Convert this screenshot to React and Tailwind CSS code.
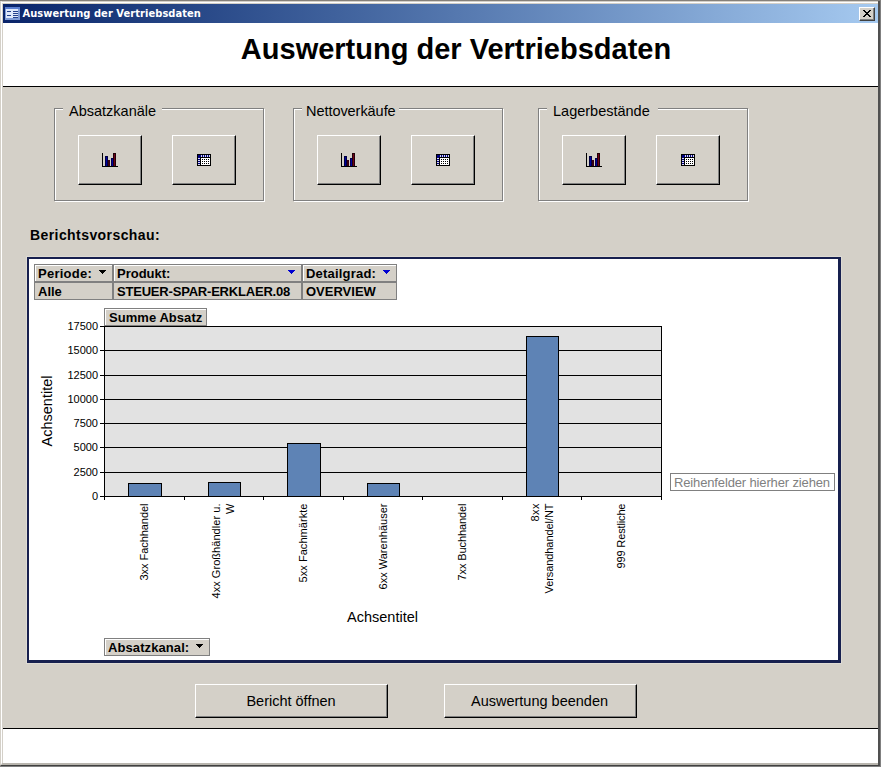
import React from "react";

const SANS = "font-['Liberation_Sans',Arial,sans-serif]";

function ChartIcon() {
  return (
    <svg width="16" height="14" viewBox="0 0 16 14" shapeRendering="crispEdges" className="block">
      <path d="M0 0h1v14h-1zM0 13h16v1H0z" fill="#000" />
      <path d="M3 3h3v10H3z" fill="#000040" />
      <path d="M4 4h1v9H4z" fill="#0000a0" />
      <path d="M6 7h2v6H6z" fill="#3a0010" />
      <path d="M9 5h3v8H9z" fill="#000050" />
      <path d="M10 6h1v7h-1z" fill="#0000a0" />
      <path d="M11 0h3v13h-3z" fill="#200008" />
      <path d="M12 1h1v12h-1z" fill="#700018" />
    </svg>
  );
}

function GridIcon() {
  const cols = [5, 7, 9, 11];
  const rows = [5, 7, 9];
  return (
    <svg width="14" height="12" viewBox="0 0 14 12" shapeRendering="crispEdges" className="block">
      <path d="M0 0h14v12H0z" fill="#000" />
      <path d="M1 1h12v2H1zM1 3h2v8H1z" fill="#000080" />
      <path d="M4 1h1v2H4zM6 1h1v2H6zM8 1h1v2H8zM10 1h1v2h-1zM12 1h1v2h-1z" fill="#d8d8f0" />
      <path d="M1 4h2v1H1zM1 6h2v1H1zM1 8h2v1H1zM1 10h2v1H1z" fill="#d8d8f0" />
      <path d="M4 4h9v7H4z" fill="#fff" />
      {rows.map((y) => cols.map((x) => <rect key={x + "-" + y} x={x} y={y} width="1" height="1" fill="#000" />))}
    </svg>
  );
}

function PushButton({ className, innerClass = "pt-px pl-px", children }) {
  return (
    <button className={"block border border-t-white border-l-white border-r-black border-b-black bg-[#d4d0c8] " + className}>
      <span className={"flex h-full w-full items-center justify-center border-r border-b border-[#808080] " + innerClass}>{children}</span>
    </button>
  );
}

function Group({ label, className, labelClass }) {
  return (
    <fieldset className={"h-[93px] w-[210px] border border-[#808080] shadow-[inset_1px_1px_0_#fff,1px_1px_0_#fff] " + className}>
      <div className={"-mt-[6px] ml-2 flex h-4 items-center bg-[#d4d0c8] text-[14.5px] leading-4 " + labelClass}>{label}</div>
      <div className="mt-4 ml-[23px] flex gap-[30px]">
        <PushButton className="h-[50px] w-16"><ChartIcon /></PushButton>
        <PushButton className="h-[50px] w-16"><GridIcon /></PushButton>
      </div>
    </fieldset>
  );
}

function Arrow({ color = "#000" }) {
  return (
    <svg width="7" height="4" viewBox="0 0 7 4" shapeRendering="crispEdges" className="block">
      <path d="M0 0h7v1H0zM1 1h5v1H1zM2 2h3v1H2zM3 3h1v1H3z" fill={color} />
    </svg>
  );
}

function Field({ title, value, color, className, titleClass = "", valueClass = "" }) {
  return (
    <div className={"border-r border-[#808080] " + className}>
      <div className="flex h-[18px] justify-between border-t border-b border-l border-[#808080] pr-[6px] pl-[3px] shadow-[inset_1px_1px_0_#fff]">
        <span className={"leading-[17px] " + titleClass}>{title}</span>
        <span className="mt-[5px]"><Arrow color={color} /></span>
      </div>
      <div className={"h-[18px] border-t border-b border-l border-[#808080] pl-[3px] leading-[17px] " + valueClass}>{value}</div>
    </div>
  );
}

const Y_TICKS = [
  [17500, 326], [15000, 350], [12500, 375], [10000, 399],
  [7500, 423], [5000, 447], [2500, 472], [0, 496],
];
const X_TICKS = [104, 184, 263, 343, 422, 502, 581, 661];
const BARS = [[128, 34, 483], [208, 33, 482], [287, 34, 443], [367, 33, 483], [526, 33, 336]];
const X_LABELS = [
  [148, "3xx Fachhandel", 77], [220, "4xx Großhändler u.", 95], [234, "W", 11],
  [307, "5xx Fachmärkte", 79], [387, "6xx Warenhäuser", 86], [466, "7xx Buchhandel", 77],
  [539, "8xx", 18], [553, "Versandhandel/NT", 90], [625, "999 Restliche", 65],
];

function SalesChart() {
  return (
    <svg width="637" height="312" viewBox="29 326 637 312" className={"block shrink-0 overflow-visible " + SANS}>
      <g shapeRendering="crispEdges">
        <rect x="104" y="326" width="558" height="171" fill="#e2e2e2" />
        {Y_TICKS.map(([v, y]) => <rect key={v} x="100" y={y} width="562" height="1" />)}
        {X_TICKS.map((x) => <rect key={x} x={x} y="496" width="1" height="4" />)}
        <rect x="104" y="326" width="1" height="171" />
        <rect x="661" y="326" width="1" height="171" />
        {BARS.map(([x, w, y]) => (
          <g key={x}>
            <rect x={x} y={y} width={w} height={497 - y} />
            <rect x={x + 1} y={y + 1} width={w - 2} height={495 - y} fill="#5e83b5" />
          </g>
        ))}
      </g>
      <g fontSize="11" textAnchor="end">
        {Y_TICKS.map(([v, y]) => <text key={v} x="98" y={y + 4}>{v}</text>)}
        {X_LABELS.map(([x, t, len]) => (
          <text key={t} transform={`translate(${x} 503.5) rotate(-90)`} textLength={len}>{t}</text>
        ))}
      </g>
      <g fontSize="14.5" textAnchor="middle">
        <text transform="translate(52 411) rotate(-90)">Achsentitel</text>
        <text x="382.5" y="622">Achsentitel</text>
      </g>
    </svg>
  );
}

function FieldButton({ className, children }) {
  return (
    <div className={"flex h-[18px] border border-[#808080] bg-[#d4d0c8] leading-[17px] shadow-[inset_1px_1px_0_#fff] " + className}>
      {children}
    </div>
  );
}

export default function App() {
  return (
    <div className={"flex h-[767px] w-[881px] flex-col border-t border-r border-b border-t-[#85807a] border-r-[#808080] border-b-[#808080] bg-[#d4d0c8] text-black " + SANS}>
      <div className="flex h-[765px] flex-col border-r-2 border-b border-l border-r-[#505050] border-b-[#404040] border-l-[#d4d0c8]">
        <div className="flex h-[764px] flex-col border-t border-b-2 border-l border-t-[#d4d0c8] border-b-[#b8b5ae] border-l-white">
          <div className="h-px shrink-0 bg-white" />
          <div className="h-px shrink-0 bg-[#d4d0c8]" />
          <header className="ml-px flex h-[19px] shrink-0 items-center bg-linear-to-r from-[#0a246a] to-[#a6caf0] pr-[3px] pl-[2px]">
            <svg width="15" height="13" viewBox="0 0 15 13" shapeRendering="crispEdges" className="block">
              <rect width="15" height="13" fill="#7f9bd6" />
              <rect x="1" y="2" width="12" height="9" fill="#dfe8fa" />
              <rect width="15" height="2" fill="#5b7fd0" />
              <path d="M2 4h4v1H2zM2 8h4v1H2zM8 4h5v1H8zM8 6h5v1H8zM8 8h5v1H8zM8 10h5v1H8z" fill="#24408c" />
            </svg>
            <span className="ml-[2.5px] font-['DejaVu_Sans_Condensed','DejaVu_Sans',sans-serif] text-[11px] leading-[18px] font-bold tracking-[0.07px] whitespace-nowrap text-white">
              Auswertung der Vertriebsdaten
            </span>
            <button className="ml-auto flex h-[14px] w-4 items-center justify-center border border-t-white border-l-white border-r-[#404040] border-b-[#404040] bg-[#d4d0c8] shadow-[inset_-1px_-1px_0_#808080]">
              <svg width="8" height="7" viewBox="0 0 8 7" shapeRendering="crispEdges" className="block">
                <path d="M0 0h2v1H0zM6 0h2v1H6zM1 1h2v1H1zM5 1h2v1H5zM2 2h4v1H2zM3 3h2v1H3zM2 4h4v1H2zM1 5h2v1H1zM5 5h2v1H5zM0 6h2v1H0zM6 6h2v1H6z" />
              </svg>
            </button>
          </header>
          <div className="ml-px flex h-16 shrink-0 justify-center border-b border-black bg-white pl-[31px]">
            <h1 className="pt-[9px] text-[29px] leading-[34px] font-bold whitespace-nowrap">Auswertung der Vertriebsdaten</h1>
          </div>

          <main className="flex h-[641px] shrink-0 flex-col pl-[25px]">
            <div className="flex pt-[21px] pl-[27px]">
              <Group label="Absatzkanäle" labelClass="w-[99px] pl-[6px]" className="" />
              <Group label="Nettoverkäufe" labelClass="w-[97px] pl-[4px] tracking-[-0.05px]" className="ml-[29px]" />
              <Group label="Lagerbestände" labelClass="w-[111px] pl-[6px]" className="ml-[35px]" />
            </div>
            <h2 className="mt-[24px] ml-[3px] h-5 text-[14px] leading-5 font-bold tracking-[0.42px]">Berichtsvorschau:</h2>

            <section className="mt-[12px] h-[406px] w-[814px] shrink-0 border-t-2 border-r-3 border-b-3 border-l-2 border-[#17204f] bg-white pt-[5px] text-[13px] shadow-[0_0_0_1px_#dedbd4]">
              <div className="ml-[5px] flex h-9 w-[363px] bg-[#d4d0c8] font-bold">
                <Field title="Periode:" value="Alle" className="w-[79px]" titleClass="tracking-[0.25px]" />
                <Field title="Produkt:" value="STEUER-SPAR-ERKLAER.08" color="#0000d0" className="w-[189px]" valueClass="tracking-[-0.2px]" />
                <Field title="Detailgrad:" value="OVERVIEW" color="#0000d0" className="w-[95px]" titleClass="tracking-[0.2px]" />
              </div>
              <div className="mt-2 ml-[75px] flex">
                <FieldButton className="w-[103px] pl-1 font-bold tracking-[0.05px]">Summe Absatz</FieldButton>
              </div>
              <div className="flex">
                <SalesChart />
                <div className="mt-[147px] ml-1 flex h-[18px] w-[165px] shrink-0 border border-[#808080] pl-[3px] leading-[17px] tracking-[-0.14px] whitespace-nowrap text-[#808080]">
                  Reihenfelder hierher ziehen
                </div>
              </div>
              <div className="ml-[75px] flex">
                <FieldButton className="w-[106px] justify-between pr-[6px] pl-[3px] font-bold">
                  <span className="tracking-[0.09px]">Absatzkanal:</span>
                  <span className="mt-[5px]"><Arrow /></span>
                </FieldButton>
              </div>
            </section>

            <div className="mt-[21px] ml-[168px] flex gap-14 text-[14.5px]">
              <PushButton className="h-[34px] w-[193px]" innerClass="pt-[2px]">Bericht öffnen</PushButton>
              <PushButton className="h-[34px] w-[193px]" innerClass="pt-[2px] pr-px">Auswertung beenden</PushButton>
            </div>
          </main>
          <footer className="ml-px grow border-t border-black bg-white" />
        </div>
      </div>
    </div>
  );
}
